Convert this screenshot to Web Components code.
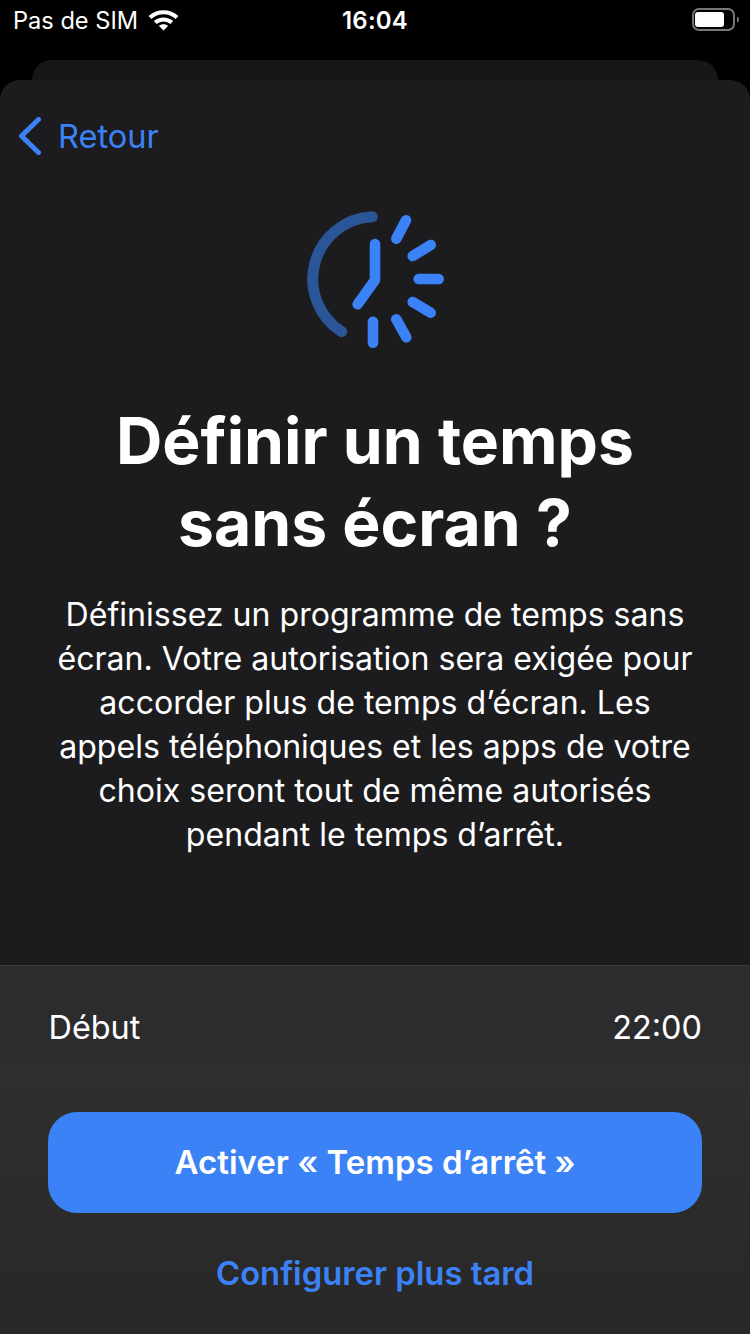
<!DOCTYPE html>
<html lang="fr">
<head>
<meta charset="utf-8">
<title>Temps d'arrêt</title>
<style>
  html, body { margin: 0; background: #000; }
  body { width: 750px; height: 1334px; overflow: hidden; font-family: Inter, "Noto Sans", sans-serif; color: #fff; }
  screen-time-page { height: 1334px; }
</style>
</head>
<body>
<screen-time-page>
  <status-bar slot="status"></status-bar>
  <back-link slot="nav">Retour</back-link>
  <downtime-icon slot="icon"></downtime-icon>
  <span slot="title">Définir un temps<br>sans écran ?</span>
  <span slot="body">Définissez un programme de temps sans<br>écran. Votre autorisation sera exigée pour<br>accorder plus de temps d’écran. Les<br>appels téléphoniques et les apps de votre<br>choix seront tout de même autorisés<br>pendant le temps d’arrêt.</span>
  <setup-footer slot="footer" label="Début" value="22:00" primary="Activer « Temps d’arrêt »" secondary="Configurer plus tard"></setup-footer>
</screen-time-page>
<script>
customElements.define('status-bar', class StatusBar extends HTMLElement {
    constructor() {
        super();
        this.attachShadow({ mode: 'open' }).innerHTML = `
            <style>
                :host { display: grid; grid-template-columns: 1fr auto 1fr; align-items: center; height: 40px; padding: 0 8px; font-size: 24px; color: #fff; }
                .left { display: flex; align-items: center; gap: 10px; padding-left: 5px; font-size: 23.6px; font-weight: 400; }
                .time { font-weight: 600; letter-spacing: .2px; }
                .right { display: flex; justify-content: flex-end; }
                svg { display: block; }
            </style>
            <div class="left">
                <span>Pas de SIM</span>
                <svg width="31" height="22" viewBox="0 0 31 22" fill="none" stroke="#fff" stroke-width="4">
                    <path d="M2 8.5C9.5 1.5 21.5 1.5 29 8.5"/>
                    <path d="M7.2 13.6C11.8 9.4 19.2 9.4 23.8 13.6"/>
                    <path d="M15.5 21.5L10.8 16.8C13.5 14.6 17.5 14.6 20.2 16.8Z" fill="#fff" stroke="none"/>
                </svg>
            </div>
            <div class="time">16:04</div>
            <div class="right">
                <svg width="50" height="24" viewBox="0 0 50 24" fill="none">
                    <rect x="1" y="1" width="41" height="21" rx="6" stroke="#777" stroke-width="2"/>
                    <rect x="3" y="4" width="29" height="15" rx="3" fill="#fff"/>
                    <path d="M45 8.5C46.5 9 47 10 47 11.5S46.5 14 45 14.5Z" fill="#777"/>
                </svg>
            </div>`;
    }
});

customElements.define('back-link', class BackLink extends HTMLElement {
    constructor() {
        super();
        this.attachShadow({ mode: 'open' }).innerHTML = `
            <style>
                :host { display: inline-flex; align-items: center; gap: 17px; height: 112px; padding-left: 19px; font-size: 32.6px; color: #3b82f6; }
                svg { display: block; }
            </style>
            <svg width="22" height="38" viewBox="0 0 22 38" fill="none" stroke="#3b82f6" stroke-width="5" stroke-linecap="round" stroke-linejoin="round">
                <path d="M19.5 2.5L2.5 19L19.5 35.5"/>
            </svg>
            <slot></slot>`;
    }
});

customElements.define('downtime-icon', class DowntimeIcon extends HTMLElement {
    constructor() {
        super();
        this.attachShadow({ mode: 'open' }).innerHTML = `
            <style>
                :host { display: block; width: 170px; height: 170px; }
                svg { display: block; }
            </style>
            <svg width="170" height="170" viewBox="0 0 170 170" fill="none" stroke-linecap="round" stroke-linejoin="round">
                <path d="M82.3 21.7A62.4 62.4 0 0 0 51.7 136.7" stroke="#2a5597" stroke-width="11"/>
                <g stroke="#3b82f6" stroke-width="10.6">
                    <path d="M85 49V85L67.7 109.3"/>
                    <path d="M116 25.3L106.3 43.7"/>
                    <path d="M140.7 50L122.7 61"/>
                    <path d="M148.7 84H128.7"/>
                    <path d="M140.7 117.7L122.7 107"/>
                    <path d="M116.3 142.3L106.3 124.3"/>
                    <path d="M83 147.7V126.7"/>
                </g>
            </svg>`;
    }
});

customElements.define('setup-footer', class SetupFooter extends HTMLElement {
    constructor() {
        super();
        this.attachShadow({ mode: 'open' }).innerHTML = `
            <style>
                :host { display: block; height: 369px; border-top: 1px solid #3d3d3f; background: linear-gradient(#313133, #282828); box-sizing: border-box; }
                .row { display: flex; justify-content: space-between; align-items: center; box-sizing: border-box; height: 98px; padding: 24px 48px 0 48.5px; background: #2c2c2e; font-size: 32.4px; color: #fff; }
                .actions { display: flex; flex-direction: column; align-items: stretch; padding: 48px 48px 0; }
                .primary { display: flex; align-items: center; justify-content: center; box-sizing: border-box; height: 101px; padding-bottom: 2px; border-radius: 29px; background: #3b82f6; font-size: 33px; font-weight: 600; color: #fff; }
                .secondary { display: flex; align-items: center; justify-content: center; height: 120px; font-size: 32.8px; font-weight: 600; color: #3b82f6; }
            </style>
            <div class="row"><span class="label"></span><span class="value"></span></div>
            <div class="actions">
                <div class="primary"></div>
                <div class="secondary"></div>
            </div>`;
    }
    connectedCallback() {
        const root = this.shadowRoot;
        root.querySelector('.label').textContent = this.getAttribute('label');
        root.querySelector('.value').textContent = this.getAttribute('value');
        root.querySelector('.primary').textContent = this.getAttribute('primary');
        root.querySelector('.secondary').textContent = this.getAttribute('secondary');
    }
});

customElements.define('screen-time-page', class ScreenTimePage extends HTMLElement {
    constructor() {
        super();
        this.attachShadow({ mode: 'open' }).innerHTML = `
            <style>
                :host { display: flex; flex-direction: column; background: #000; }
                .peek { height: 20px; margin: 20px 32px 0; border-radius: 20px 20px 0 0; background: #161617; }
                .sheet { flex: 1; display: flex; flex-direction: column; border-radius: 20px 20px 0 0; background: #1c1c1e; overflow: hidden; }
                .nav { height: 112px; }
                .content { flex: 1; display: flex; flex-direction: column; align-items: center; text-align: center; }
                .icon { margin-top: 3px; }
                h1 { margin: 35px 0 0; font-size: 64.2px; line-height: 82px; font-weight: 700; color: #fff; }
                p { margin: 29px 0 0; font-size: 32.1px; line-height: 44px; font-weight: 400; color: #fff; }
            </style>
            <slot name="status"></slot>
            <div class="peek"></div>
            <div class="sheet">
                <div class="nav"><slot name="nav"></slot></div>
                <div class="content">
                    <div class="icon"><slot name="icon"></slot></div>
                    <h1><slot name="title"></slot></h1>
                    <p><slot name="body"></slot></p>
                </div>
                <slot name="footer"></slot>
            </div>`;
    }
});
</script>
</body>
</html>
